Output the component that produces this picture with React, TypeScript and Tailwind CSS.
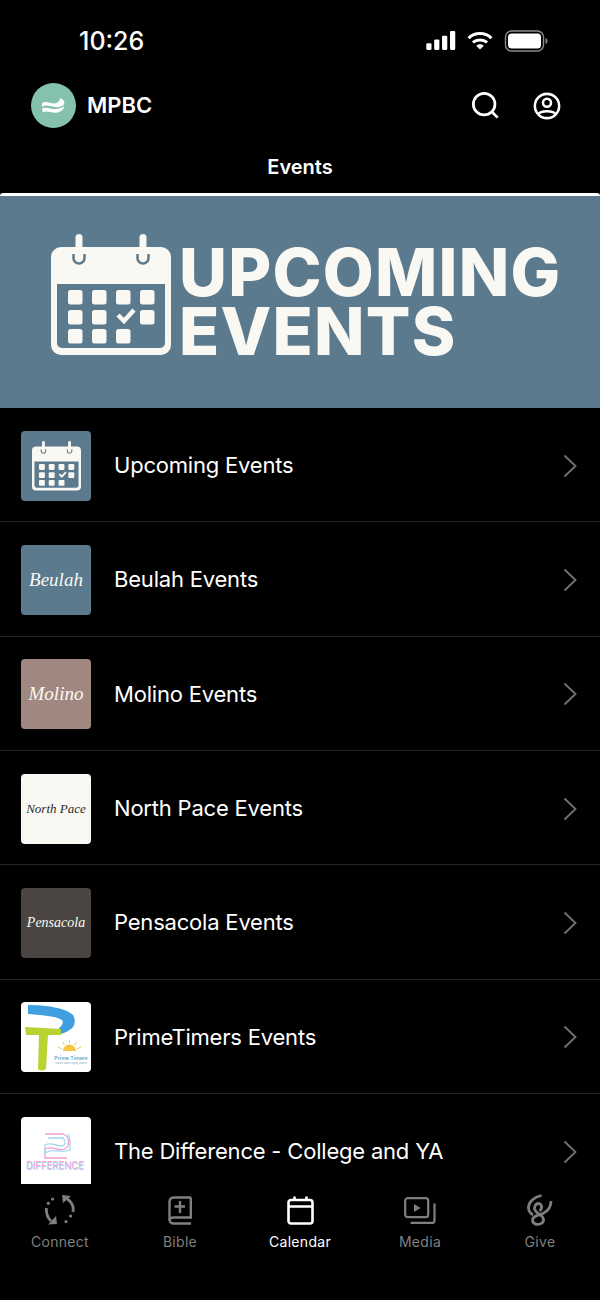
import type { ReactNode } from "react";

function CalendarArt({ className }: { className: string }) {
  const fg = "#faf8f3";
  const bg = "#5b7a8e";
  const cols = [17, 41, 65, 89];
  const rows = [56, 76, 95];
  const cells: [number, number][] = [
    [0, 0], [1, 0], [2, 0], [3, 0],
    [0, 1], [1, 1], [3, 1],
    [0, 2], [1, 2], [2, 2],
  ];
  return (
    <svg viewBox="0 0 120 122" className={className}>
      <rect x="0" y="13" width="120" height="108" rx="10" fill={fg} />
      <path d="M6 50H114V109a5 5 0 0 1-5 5H11a5 5 0 0 1-5-5Z" fill={bg} />
      {[28, 92].map((x) => (
        <g key={x}>
          <path d={`M${x - 5.5} 20v4a5.500 5.500 0 0 0 11 0v-4`} fill="none" stroke={bg} strokeWidth="2.500" />
          <rect x={x - 3.5} y="0" width="7" height="25" rx="3.500" fill={fg} />
        </g>
      ))}
      {cells.map(([c, r]) => (
        <rect key={`${c}-${r}`} x={cols[c]} y={rows[r]} width="14.500" height="14.500" rx="2.500" fill={fg} />
      ))}
      <path d="M67 81l6 6 10-11" fill="none" stroke={fg} strokeWidth="4.500" />
    </svg>
  );
}

function ScriptThumb({ bg, color, label, size }: { bg: string; color: string; label: string; size: string }) {
  return (
    <div className={`w-[70px] h-[70px] rounded-[4px] flex items-center justify-center ${bg}`}>
      <span className={`font-['Liberation_Serif',serif] italic ${size} ${color}`}>{label}</span>
    </div>
  );
}

function PrimeThumb() {
  return (
    <svg viewBox="0 0 70 70" className="w-[70px] h-[70px] rounded-[4px] bg-white">
      <path d="M7 3C25 3 45 6 52 13C55 18 54 24 50 27C47 29 44 31 40 32L38 26C41 24 43 20 41 18C35 14 20 13 7 12Z" fill="#3f9fe0" />
      <path d="M4 25L40 27L40 33L27 33L25 67Q20 70 17 67L18 33L5 33Z" fill="#b7d433" />
      <path d="M42 49a6.500 6.500 0 0 1 13 0Z" fill="#f6c544" />
      <path d="M48.500 41v-3M43.500 43l-2-3M53.500 43l2-3M41 47l-4-2M56 47l4-2" stroke="#f6c544" strokeWidth="1" />
      <text x="50" y="58" textAnchor="middle" fontSize="5.200" fontWeight="600" fill="#5aa9c9">Prime Timers</text>
      <text x="50" y="62" textAnchor="middle" fontSize="2.400" fill="#8aa">Mature Saints Aging Graces</text>
    </svg>
  );
}

function DifferenceThumb() {
  return (
    <svg viewBox="0 0 70 70" className="w-[70px] h-[70px] rounded-[4px] bg-white">
      <path d="M24 17H42C49 19 49 29 44 32C38 35 32 28 24 32V41H46" fill="none" stroke="#f29ccf" strokeWidth="1.300" />
      <path d="M27 21H42C45 24 45 28 41 29C36 30 31 24 24 28V36C32 30 38 37 49 33V25C49 22 48 20 47 17" fill="none" stroke="#9fd8f2" strokeWidth="1.300" />
      <text x="5.500" y="52.500" fontSize="10.500" fontWeight="500" fill="#a6dcf5" textLength="58" lengthAdjust="spacingAndGlyphs">DIFFERENCE</text>
      <text x="5" y="52" fontSize="10.500" fontWeight="400" fill="#f3a6d6" textLength="58" lengthAdjust="spacingAndGlyphs">DIFFERENCE</text>
    </svg>
  );
}

const rows: { label: string; thumb: ReactNode }[] = [
  {
    label: "Upcoming Events",
    thumb: (
      <div className="w-[70px] h-[70px] rounded-[4px] bg-[#5b7a8e] flex items-center justify-center">
        <CalendarArt className="w-[49px] h-[50px]" />
      </div>
    ),
  },
  { label: "Beulah Events", thumb: <ScriptThumb bg="bg-[#5b7a8e]" color="text-[#faf8f3]" label="Beulah" size="text-[19px]" /> },
  { label: "Molino Events", thumb: <ScriptThumb bg="bg-[#a08880]" color="text-[#faf8f3]" label="Molino" size="text-[19px]" /> },
  { label: "North Pace Events", thumb: <ScriptThumb bg="bg-[#faf8f3]" color="text-[#2b2b2b]" label="North Pace" size="text-[13px]" /> },
  { label: "Pensacola Events", thumb: <ScriptThumb bg="bg-[#4a4542]" color="text-[#faf8f3]" label="Pensacola" size="text-[14px]" /> },
  { label: "PrimeTimers Events", thumb: <PrimeThumb /> },
  { label: "The Difference - College and YA", thumb: <DifferenceThumb /> },
];

function Row({ label, thumb }: { label: string; thumb: ReactNode }) {
  return (
    <div className="h-[114.33px] shrink-0 flex items-center pl-[21px] pr-[23px] pt-[2px] border-b border-[#262626]">
      {thumb}
      <span className="ml-[23px] flex-1 text-[22px] tracking-[-0.2px] text-white">{label}</span>
      <svg viewBox="0 0 14 24" className="w-[14px] h-[24px]" fill="none" stroke="#727272" strokeWidth="1.800">
        <path d="M1.500 1.500L12.500 12L1.500 22.500" />
      </svg>
    </div>
  );
}

function ConnectIcon() {
  return (
    <svg viewBox="0 0 30 30" className="w-[30px] h-[30px]" fill="none" stroke="currentColor" strokeWidth="2.800">
      <path d="M21 3C26 6 29 11 28 17" />
      <path d="M17 0L26 1L18 8Z" fill="currentColor" stroke="none" />
      <path d="M1.500 13C1 18 2 22 6 26" />
      <path d="M3 29.500L12 29L11 21Z" fill="currentColor" stroke="none" />
      <circle cx="3.300" cy="8.300" r="1.600" fill="currentColor" stroke="none" />
      <circle cx="7.600" cy="4" r="1.600" fill="currentColor" stroke="none" />
      <circle cx="25.600" cy="21" r="1.600" fill="currentColor" stroke="none" />
      <circle cx="21" cy="26.600" r="1.600" fill="currentColor" stroke="none" />
    </svg>
  );
}

function BibleIcon() {
  return (
    <svg viewBox="0 0 24 29" className="w-[24px] h-[29px]" fill="none" stroke="currentColor" strokeWidth="2.400">
      <path d="M23 1.500H5.500A4 4 0 0 0 1.500 5.500V23.500A4 4 0 0 0 5.500 27.500H23" />
      <path d="M22.800 1.500V21.500H5.500A4 3 0 0 0 1.500 24.500" />
      <path d="M12 5V17M6.500 10.500H17" />
    </svg>
  );
}

function CalendarIcon() {
  return (
    <svg viewBox="0 0 27 29" className="w-[27px] h-[29px]" fill="none" stroke="currentColor" strokeWidth="2.600">
      <rect x="1.500" y="4" width="24" height="23.500" rx="2.500" />
      <path d="M1.500 10.500H25.500M7.500 0.500V5M19.500 0.500V5" />
    </svg>
  );
}

function MediaIcon() {
  return (
    <svg viewBox="0 0 32 27" className="w-[32px] h-[27px]" fill="none" stroke="currentColor" strokeWidth="2.200">
      <rect x="1.200" y="1.200" width="23" height="19" rx="2.500" />
      <path d="M10 7V15L16.500 11Z" fill="currentColor" stroke="none" />
      <path d="M6.500 25.800H28.500A2 2 0 0 0 30.500 23.800V6.500" />
    </svg>
  );
}

function GiveIcon() {
  return (
    <svg viewBox="0 0 26 32" className="w-[26px] h-[32px]" fill="none" stroke="currentColor" strokeWidth="2.800">
      <path d="M14.500 1.500C7 3 1.500 8 1.500 13.500C1.500 17 3.500 19.500 6 21" />
      <path d="M24 7C24 13 21 17 16 19.500C11 21.500 5.500 22 5.500 26C5.500 30 10 31 13 30C16.500 29 17.500 26 15.500 23C13.500 20.500 8.500 19 7.500 15C7 11 10.500 8.500 13 10C15.500 11.500 15 15 12.500 17" />
    </svg>
  );
}

function Tab({ label, active, icon }: { label: string; active?: boolean; icon: ReactNode }) {
  return (
    <div className={`flex-1 flex flex-col items-center ${active ? "text-white" : "text-[#7f7f7f]"}`}>
      <div className="h-[32px] flex items-center justify-center">{icon}</div>
      <span className="mt-[6px] text-[14px] leading-[20px] tracking-[0.3px]">{label}</span>
    </div>
  );
}

export default function App() {
  return (
    <div className="w-[600px] h-[1300px] bg-black text-white flex flex-col overflow-hidden font-['Inter',sans-serif]">
      {/* status bar */}
      <div className="h-[83px] shrink-0 flex items-center justify-between pl-[79px] pr-[52px]">
        <span className="text-[25px] font-medium">10:26</span>
        <div className="flex items-center gap-[11px] -mt-[2px]">
          <svg viewBox="0 0 31 20" className="w-[30px] h-[19px]" fill="white">
            <rect x="0" y="13" width="5.500" height="7" rx="1.200" />
            <rect x="8.300" y="9" width="5.500" height="11" rx="1.200" />
            <rect x="16.600" y="5" width="5.500" height="15" rx="1.200" />
            <rect x="25" y="0" width="5.500" height="20" rx="1.200" />
          </svg>
          <svg viewBox="0 0 27 20" className="w-[26px] h-[19px]" fill="none" stroke="white" strokeWidth="3.200">
            <path d="M1.500 7.500C8 1 19 1 25.500 7.500" />
            <path d="M6 12C10 8.500 17 8.500 21 12" />
            <path d="M13.500 19.500L9.500 15.500C12 13.500 15 13.500 17.500 15.500Z" fill="white" stroke="none" />
          </svg>
          <svg viewBox="0 0 43 22" className="w-[44px] h-[22px]">
            <rect x="1" y="1" width="38" height="20" rx="6" fill="none" stroke="#8a8a8a" strokeWidth="1.400" />
            <rect x="3.500" y="3.500" width="33" height="15" rx="3.500" fill="white" />
            <path d="M41 8v6a3 3 0 0 0 2-3a3 3 0 0 0-2-3Z" fill="#8a8a8a" />
          </svg>
        </div>
      </div>

      {/* app header */}
      <div className="h-[45px] shrink-0 flex items-center pl-[31px] pr-[39px]">
        <div className="w-[45px] h-[45px] rounded-full bg-[#85c2ae] flex items-center justify-center">
          <svg viewBox="0 0 26 18" className="w-[27px] h-[16px]" fill="white">
            <path d="M0 6C5 2 10 7 15 6C19 5 21 2 20 0C24 1 26 4 25 7C22 11 15 11 10 9C6 8 3 8 0 10Z" />
            <path d="M0 12C5 9 10 13 16 12.500C20 12 23 11 25 9C25 13 21 16 16 16.500C10 17 6 14 1 16Z" />
          </svg>
        </div>
        <span className="ml-[11px] flex-1 text-[22px] font-semibold">MPBC</span>
        <svg viewBox="0 0 30 30" className="w-[27px] h-[27px]" fill="none" stroke="white" strokeWidth="3">
          <circle cx="13.500" cy="13.500" r="12" />
          <path d="M22 22L28.500 28.500" />
        </svg>
        <svg viewBox="0 0 30 30" className="ml-[34px] w-[28px] h-[28px]" fill="none" stroke="white" strokeWidth="2.700">
          <circle cx="15" cy="15" r="13" />
          <circle cx="15" cy="11.500" r="4.300" />
          <path d="M5.500 24C8 19.500 22 19.500 24.500 24" />
        </svg>
      </div>

      {/* screen title */}
      <div className="h-[65px] shrink-0 flex items-center justify-center pt-[13px]">
        <span className="text-[20px] font-semibold">Events</span>
      </div>

      <div className="h-[3px] shrink-0 bg-white rounded-t-[3px]" />

      {/* banner */}
      <div className="h-[212px] shrink-0 bg-[#5b7a8e] flex items-center pl-[51px]">
        <CalendarArt className="w-[120px] h-[122px] mb-[15px]" />
        <div className="ml-[8px] flex flex-col text-[#faf8f3] text-[66px] font-extrabold tracking-[1.25px] leading-[59px]">
          <span>UPCOMING</span>
          <span>EVENTS</span>
        </div>
      </div>

      {/* list */}
      <div className="flex-1 min-h-0 overflow-hidden flex flex-col">
        {rows.map((r) => (
          <Row key={r.label} label={r.label} thumb={r.thumb} />
        ))}
      </div>

      {/* tab bar */}
      <div className="h-[116px] shrink-0 bg-black flex pt-[10px]">
        <Tab label="Connect" icon={<ConnectIcon />} />
        <Tab label="Bible" icon={<BibleIcon />} />
        <Tab label="Calendar" active icon={<CalendarIcon />} />
        <Tab label="Media" icon={<MediaIcon />} />
        <Tab label="Give" icon={<GiveIcon />} />
      </div>
    </div>
  );
}
